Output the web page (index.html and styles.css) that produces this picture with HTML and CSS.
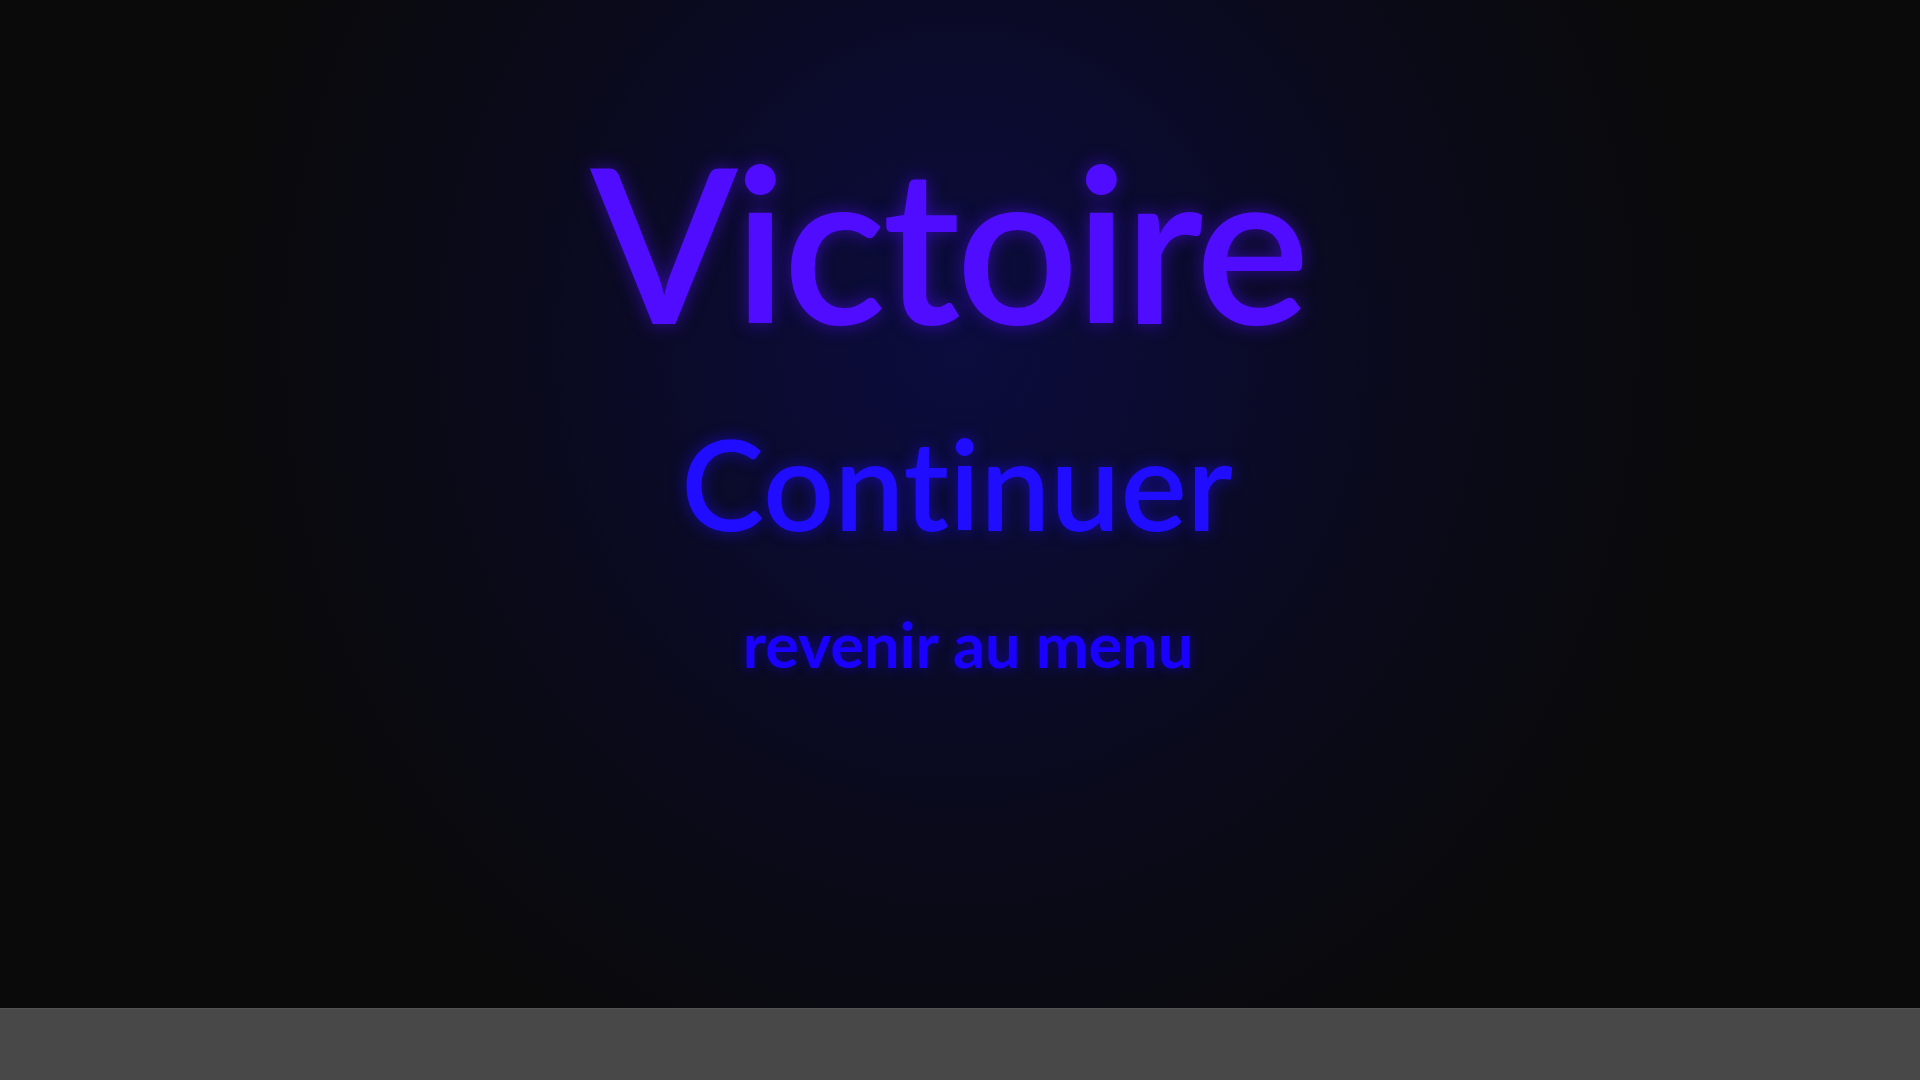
FILE: index.html
```html
<!DOCTYPE html>
<html lang="fr">
<head>
<meta charset="utf-8">
<title>Victoire</title>
<link rel="stylesheet" href="styles.css">
</head>
<body>
<main class="screen">
  <h1 class="title">Victoire</h1>
  <button class="btn btn-continue">Continuer</button>
  <button class="btn btn-menu">revenir au menu</button>
</main>
<footer class="bar"></footer>
</body>
</html>
```

FILE: styles.css
```css
html, body {
  margin: 0;
  padding: 0;
  width: 1920px;
  height: 1080px;
  overflow: hidden;
  background: #0a0a0a;
  font-family: Lato, "Open Sans", sans-serif;
  font-variant-ligatures: none;
}

.screen {
  height: 1008px;
  display: flex;
  flex-direction: column;
  align-items: center;
  padding-top: 134px;
  box-sizing: border-box;
  background: radial-gradient(ellipse 760px 820px at 50% 34%, #0c0c3e 0%, #0b0b30 28%, #0a0a1c 58%, #0a0a0a 100%);
}

.title {
  margin: 0 0 0 -24px;
  font-size: 215px;
  line-height: 1;
  font-weight: 600;
  letter-spacing: -4px;
  color: #500cff;
  text-shadow: 0 0 18px rgba(80, 12, 255, 0.55);
}

.btn {
  border: 0;
  background: none;
  padding: 0;
  font-family: inherit;
  font-variant-ligatures: none;
  line-height: 1;
  font-weight: 700;
  cursor: pointer;
}

.btn-continue {
  margin-top: 72px;
  margin-left: -6px;
  font-size: 125px;
  font-weight: 600;
  color: #200cff;
  text-shadow: 0 0 16px rgba(32, 12, 255, 0.55);
}

.btn-menu {
  margin-top: 66px;
  margin-left: 16px;
  font-size: 63px;
  color: #1a00ff;
  text-shadow: 0 0 12px rgba(26, 0, 255, 0.5);
}

.bar {
  height: 72px;
  background: #484848;
  border-top: 1px solid #525252;
  box-sizing: border-box;
}
```
